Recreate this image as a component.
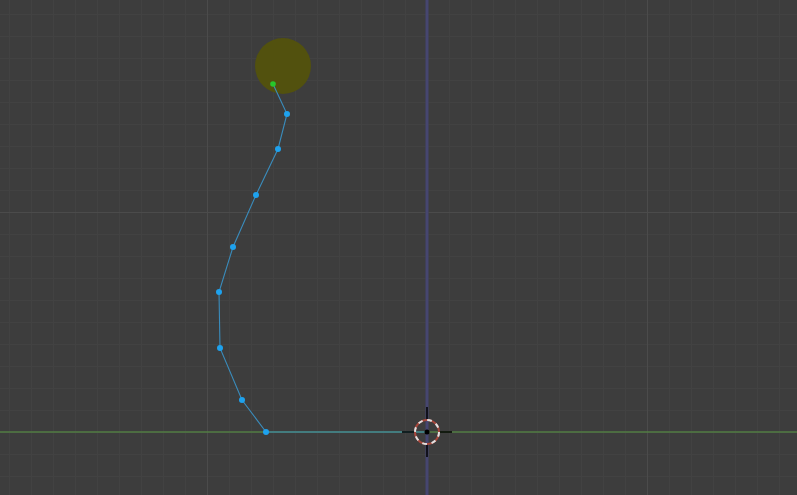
const W = 797;
const H = 495;
const OX = 427;
const OY = 432;

const minorX = Array.from({ length: 40 }, (_, i) => OX - 440 + i * 22).filter((x) => x >= 0 && x <= W);
const minorY = Array.from({ length: 40 }, (_, i) => OY - 440 + i * 22).filter((y) => y >= 0 && y <= H);
const majorX = [OX - 220, OX + 220];
const majorY = [OY - 220];

const points: [number, number][] = [
  [287, 114],
  [278, 149],
  [256, 195],
  [233, 247],
  [219, 292],
  [220, 348],
  [242, 400],
  [266, 432],
];

const Grid = () => (
  <g shapeRendering="crispEdges">
    {minorX.map((x) => (
      <line key={"mx" + x} x1={x + 0.5} y1={0} x2={x + 0.5} y2={H} stroke="#424242" strokeWidth={1} />
    ))}
    {minorY.map((y) => (
      <line key={"my" + y} x1={0} y1={y + 0.5} x2={W} y2={y + 0.5} stroke="#424242" strokeWidth={1} />
    ))}
    {majorX.map((x) => (
      <line key={"Mx" + x} x1={x + 0.5} y1={0} x2={x + 0.5} y2={H} stroke="#4b4b4b" strokeWidth={1} />
    ))}
    {majorY.map((y) => (
      <line key={"My" + y} x1={0} y1={y + 0.5} x2={W} y2={y + 0.5} stroke="#4b4b4b" strokeWidth={1} />
    ))}
  </g>
);

// viewport axes: blue (y) vertical, green (x) horizontal
const Axes = () => (
  <g>
    <line x1={OX} y1={0} x2={OX} y2={H} stroke="#424262" strokeWidth={4} opacity={0.7} />
    <line x1={OX} y1={0} x2={OX} y2={H} stroke="#464670" strokeWidth={2} />
    <line x1={0} y1={OY} x2={W} y2={OY} stroke="#527c43" strokeWidth={1.5} />
  </g>
);

const Cursor = () => (
  <g>
    <line x1={402} y1={OY} x2={415} y2={OY} stroke="#000" strokeWidth={1.5} />
    <line x1={439} y1={OY} x2={452} y2={OY} stroke="#000" strokeWidth={1.5} />
    <line x1={OX} y1={407} x2={OX} y2={420} stroke="#000" strokeWidth={1.5} />
    <line x1={OX} y1={444} x2={OX} y2={457} stroke="#000" strokeWidth={1.5} />
    <circle cx={OX} cy={OY} r={12} fill="none" stroke="#a8473c" strokeWidth={2} />
    <circle cx={OX} cy={OY} r={12} fill="none" stroke="#e2e2e2" strokeWidth={2} strokeDasharray="4.7 4.7" />
    <circle cx={OX} cy={OY} r={2.5} fill="#000" />
  </g>
);

export default function App() {
  const path = [[273, 84] as [number, number], ...points, [OX, OY] as [number, number]]
    .map(([x, y]) => `${x},${y}`)
    .join(" ");
  return (
    <div className="w-[797px] h-[495px] overflow-hidden bg-[#3d3d3d]">
      <svg width={W} height={H} viewBox={`0 0 ${W} ${H}`} className="block">
        <Grid />
        <Axes />
        <circle cx={283} cy={66} r={28} fill="#52510e" />
        <polyline points={path} fill="none" stroke="#3a8cbc" strokeWidth={1.1} />
        {points.map(([x, y]) => (
          <circle key={x + "-" + y} cx={x} cy={y} r={3} fill="#1ea2ee" />
        ))}
        <circle cx={273} cy={84} r={2.8} fill="#27c62b" />
        <Cursor />
      </svg>
    </div>
  );
}
